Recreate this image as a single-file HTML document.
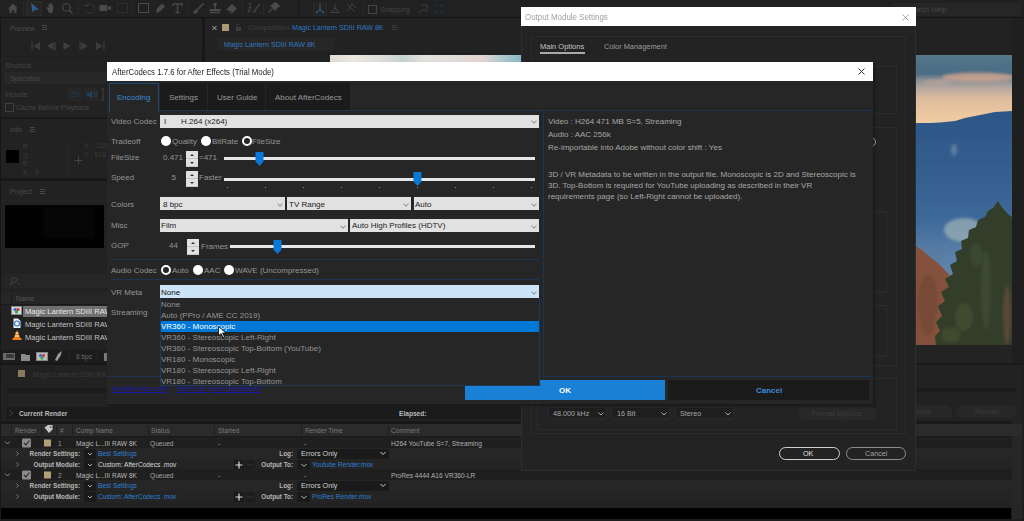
<!DOCTYPE html>
<html><head><meta charset="utf-8">
<style>
html,body{margin:0;padding:0;}
body{width:1024px;height:521px;overflow:hidden;position:relative;background:#202020;font-family:"Liberation Sans",sans-serif;font-size:8px;color:#959595;}
.a{position:absolute;}
.t{position:absolute;white-space:nowrap;line-height:10px;}
.dd{position:absolute;background:#e1e1e1;color:#1a1a1a;}
.chev{position:absolute;width:6px;height:4px;}
.chev:before{content:"";position:absolute;left:1px;top:0.5px;width:3px;height:3px;border-right:1px solid #9a9a9a;border-bottom:1px solid #9a9a9a;transform:rotate(45deg);}
.hl{position:absolute;background:#1b3652;}
.rad{width:10px;height:10px;border-radius:50%;background:#fff;box-sizing:border-box;}
.rad.sel{border:2px solid #fff;background:#262626;}
.spin{width:12px;height:16px;background:#e1e1e1;box-shadow:inset 0 -8px 0 -7px #c8c8c8;}
.spin{background:linear-gradient(#e1e1e1 0,#e1e1e1 7.5px,#c4c4c4 7.5px,#c4c4c4 8.5px,#e1e1e1 8.5px);}
.spin:before{content:"";position:absolute;left:4px;top:3px;border-left:2px solid transparent;border-right:2px solid transparent;border-bottom:2px solid #333;}
.spin:after{content:"";position:absolute;left:4px;top:11px;border-left:2px solid transparent;border-right:2px solid transparent;border-top:2px solid #333;}
.trk{height:3px;background:#e6e6e6;}
</style></head><body>


<!-- ============ AE BACKGROUND ============ -->
<!-- toolbar -->
<div class="a" style="left:0;top:0;width:1024px;height:17px;background:#212121;"></div>
<div class="a" style="left:0;top:17px;width:1024px;height:1px;background:#141414;"></div>
<svg class="a" style="left:0;top:0;" width="460" height="17">
 <g fill="#4a4a4a" stroke="none">
  <path d="M8 8.5L13 3.8L18 8.5H16.5V13H14.2V10.3H11.8V13H9.5V8.5Z"/>
 </g>
 <g stroke="#2a2a2a" stroke-width="1"><path d="M23.5 2V15M78.5 2V15M132.5 2V15M187.5 2V15M242.5 2V15M263.5 2V15M363.5 2V15"/></g>
 <path d="M299 0V17" stroke="#1a1a1a" stroke-width="1.5"/>
 <rect x="26.5" y="1.5" width="15" height="14" fill="#262626" stroke="#2c2c2c"/>
 <path d="M31 3L39 9.5L35 9.8L32.5 12.5Z" fill="#2d5f8a"/>
 <path d="M47.5 9.5L46.5 7.5C46.5 6.8 47.5 6.8 48 7.5L48.5 8.5V4.5C48.5 3.8 49.6 3.8 49.6 4.5V7.5V3.5C49.6 2.8 50.8 2.8 50.8 3.5V7.5V4C50.8 3.3 52 3.3 52 4V8V5.5C52 4.8 53.2 4.8 53.2 5.5V10C53.2 12 52 13.2 50.5 13.2C49 13.2 48.3 12.3 47.5 9.5Z" fill="#4a4a4a"/>
 <circle cx="66.5" cy="7.5" r="3.8" fill="none" stroke="#4a4a4a" stroke-width="1.1"/>
 <path d="M69.3 10.3L72.5 13.5" stroke="#4a4a4a" stroke-width="1.3"/>
 <path d="M86 6A4.5 4.5 0 1 1 86.5 11.5" fill="none" stroke="#3e3e3e" stroke-width="1.1" stroke-dasharray="1.5 0.8"/>
 <path d="M84.5 4L86.3 6.5L88.8 4.8" fill="none" stroke="#3e3e3e" stroke-width="1"/>
 <rect x="99.5" y="5" width="8" height="6" rx="1" fill="#4a4a4a"/><path d="M107 8L111 5.5V10.5Z" fill="#4a4a4a"/>
 <rect x="117.5" y="3.5" width="10" height="9" fill="none" stroke="#3a3a3a" stroke-dasharray="1.2 1"/>
 <rect x="138.5" y="3.5" width="10" height="9" fill="none" stroke="#4a4a4a" stroke-width="1"/>
 <path d="M156 13L157 8.5L162 3.5L165 6.5L160 11.5Z" fill="#4a4a4a"/>
 <path d="M173 4H182V6M177.5 4V12.5M175.5 12.5H179.5M173 4V6" fill="none" stroke="#4a4a4a" stroke-width="1.3"/>
 <path d="M203.5 3.5L197.5 9.5" stroke="#4a4a4a" stroke-width="1.6"/><path d="M196.5 9L198.5 11L196 13.5L193.5 13.5L193.8 11.5Z" fill="#4a4a4a"/>
 <circle cx="215" cy="4.5" r="1.8" fill="#4a4a4a"/><rect x="214.3" y="5" width="1.4" height="4" fill="#4a4a4a"/><rect x="209.5" y="9" width="11" height="2.3" fill="#4a4a4a"/><rect x="210" y="12" width="10" height="1.2" fill="#4a4a4a"/>
 <path d="M226.5 9.5L232 4L237 8.5L231.5 14Z" fill="#4a4a4a"/><path d="M228.5 10.5L232.5 13" stroke="#222" stroke-width="0.8"/>
 <circle cx="250" cy="3.8" r="1.1" fill="#444"/><path d="M250 5.5L249.2 9.5L248 13M249.5 7L252 8.5M249.2 9.5L251 12" stroke="#444" stroke-width="1" fill="none"/>
 <path d="M260 4L255 10" stroke="#444" stroke-width="1.3"/><path d="M254.5 9.5L256 11L254 13L252.5 12.5Z" fill="#444"/>
 <path d="M276.5 2.5L280.5 6.5L278.5 7L276 9.5L276 11.5L269.5 5L271.5 5L274 2.5Z" fill="#4a4a4a"/><path d="M272.5 8.5L268.5 12.5" stroke="#4a4a4a" stroke-width="1.1"/>
 <rect x="313.5" y="2.5" width="13" height="13" fill="#242424" stroke="#2a2a2a"/>
 <path d="M320 4V9.5L316 13M320 9.5L324 13" stroke="#2b5a85" stroke-width="1.2" fill="none"/>
 <path d="M335 4V8L331 12.5H339L335 8" stroke="#454545" stroke-width="1" fill="none"/>
 <path d="M347 4L355 12M348 11L352 4L356 8" stroke="#404040" stroke-width="1" fill="none"/>
 <rect x="368.5" y="5.5" width="8" height="8" fill="none" stroke="#444" stroke-width="1.1"/>
 <path d="M419 13L423 9L427 12M421 5H427V10" stroke="#3e3e3e" stroke-width="1" fill="none"/>
 <path d="M434 4L436.5 6.5M443 4L440.5 6.5M434 14L436.5 11.5M443 14L440.5 11.5" stroke="#1a3550" stroke-width="1.2"/>
</svg>
<div class="t" style="left:380px;top:5px;color:#444;font-size:7px;">Snapping</div>
<div class="a" style="left:892px;top:3px;width:129px;height:13px;background:#262626;"></div>
<div class="t" style="left:905px;top:5px;color:#464646;font-size:7.6px;">Search Help</div>

<!-- left column panels -->
<div class="a" style="left:0;top:18px;width:1px;height:490px;background:#181818;"></div>
<div class="a" style="left:1px;top:18px;width:201px;height:99px;background:#222;"></div>
<div class="t" style="left:10px;top:24px;color:#4a4a4a;font-size:7px;">Preview</div>
<svg class="a" style="left:0;top:18px;" width="110" height="100">
 <path d="M42 7.5H47M42 9.5H47M42 11.5H47" stroke="#464646" stroke-width="1"/>
 <g fill="#3e3e3e"><rect x="31.5" y="24" width="1.3" height="8"/><path d="M33.5 28L40 24V32Z"/>
 <path d="M47 28L53.5 24V32Z"/><rect x="54.2" y="24" width="1.3" height="8"/>
 <path d="M63.5 24L70.5 28L63.5 32Z"/>
 <rect x="79.5" y="24" width="1.3" height="8"/><path d="M81.5 24L88 28L81.5 32Z"/>
 <path d="M96 24L102.5 28L96 32Z"/><rect x="103.2" y="24" width="1.3" height="8"/></g>
 <rect x="4" y="38" width="106" height="1" fill="#1e1e1e"/>
</svg>
<div class="t" style="left:5px;top:61px;color:#464646;font-size:7px;">Shortcut</div>
<div class="a" style="left:4px;top:72px;width:110px;height:12px;background:#272727;"></div>
<div class="t" style="left:10px;top:74px;color:#474747;font-size:7px;">Spacebar</div>
<div class="t" style="left:5px;top:90px;color:#464646;font-size:7px;">Include:</div>
<div class="a" style="left:68px;top:88px;width:14px;height:13px;background:#262626;"></div>
<div class="a" style="left:84px;top:88px;width:14px;height:13px;background:#262626;"></div>
<svg class="a" style="left:68px;top:88px;" width="40" height="14">
 <ellipse cx="7" cy="6.5" rx="3.5" ry="2.3" fill="none" stroke="#1c3a55" stroke-width="1"/>
 <path d="M19 5H21L24 2.5V10.5L21 8H19Z" fill="#1f4260"/><path d="M26 4Q27.5 6.5 26 9M28 3Q30 6.5 28 10" stroke="#1f4260" fill="none"/>
 <path d="M35 1V12M33.5 1H36.5M33.5 12H36.5" stroke="#404040" fill="none"/>
</svg>
<div class="a" style="left:5px;top:103px;width:7px;height:7px;border:1px solid #3e3e3e;"></div>
<div class="t" style="left:16px;top:103px;color:#454545;font-size:7px;">Cache Before Playback</div>

<div class="a" style="left:1px;top:117px;width:201px;height:2px;background:#181818;"></div>
<div class="a" style="left:1px;top:119px;width:201px;height:59px;background:#222;"></div>
<div class="t" style="left:10px;top:125px;color:#4a4a4a;font-size:7px;">Info</div>
<svg class="a" style="left:30px;top:126px;" width="8" height="8"><path d="M0 1.5H5M0 3.5H5M0 5.5H5" stroke="#464646"/></svg>
<div class="a" style="left:6px;top:150px;width:13px;height:13px;background:#000;"></div>
<div class="t" style="left:23px;top:143px;color:#3c3c3c;font-size:7px;line-height:8.7px;">R :<br>G :<br>B :<br>A :&nbsp;&nbsp;0</div>
<div class="a" style="left:68px;top:143px;width:1px;height:33px;background:#282828;"></div>
<svg class="a" style="left:74px;top:156px;" width="9" height="9"><path d="M4.5 0.5V8.5M0.5 4.5H8.5" stroke="#444" stroke-width="1"/></svg>
<div class="t" style="left:84px;top:142px;color:#3c3c3c;font-size:7px;line-height:8.5px;">X : -111<br>Y : 518</div>

<div class="a" style="left:1px;top:178px;width:201px;height:3px;background:#181818;"></div>
<div class="a" style="left:1px;top:181px;width:201px;height:223px;background:#222;"></div>
<div class="t" style="left:10px;top:187px;color:#4a4a4a;font-size:7px;">Project</div>
<svg class="a" style="left:40px;top:188px;" width="8" height="8"><path d="M0 1.5H5M0 3.5H5M0 5.5H5" stroke="#464646"/></svg>
<div class="a" style="left:5px;top:205px;width:99px;height:43px;background:#020202;"></div>
<div class="a" style="left:44px;top:208px;width:50px;height:30px;background:#060606;"></div>
<div class="a" style="left:4px;top:274px;width:106px;height:14px;background:#262626;"></div>
<svg class="a" style="left:8px;top:276px;" width="14" height="10"><circle cx="6" cy="4" r="2.5" fill="none" stroke="#404040"/><path d="M4.5 6L2 9" stroke="#404040" stroke-width="1.2"/><path d="M9 7L10.5 8.5L12 7" fill="none" stroke="#404040" stroke-width="0.8"/></svg>
<div class="a" style="left:1px;top:292px;width:201px;height:12px;background:#262626;"></div>
<div class="a" style="left:11px;top:294px;width:1px;height:9px;background:#1a1a1a;"></div>
<div class="t" style="left:16px;top:294px;color:#555;font-size:6.8px;">Name</div>
<div class="a" style="left:1px;top:304px;width:201px;height:1px;background:#1a1a1a;"></div>
<div class="a" style="left:23px;top:306px;width:84px;height:11px;background:#707070;"></div>
<div class="t" style="left:25px;top:307px;color:#e8e8e8;font-size:7.6px;">Magic Lantern SDIII RAW</div>
<div class="t" style="left:25px;top:320px;color:#c4c4c4;font-size:7.6px;">Magic Lantern SDIII RAW</div>
<div class="t" style="left:25px;top:333px;color:#c4c4c4;font-size:7.6px;">Magic Lantern SDIII RAW</div>
<svg class="a" style="left:10px;top:305px;" width="14" height="40">
 <rect x="1" y="1" width="11" height="9" fill="#888"/><rect x="2" y="2" width="9" height="7" fill="#d6d6d6"/>
 <circle cx="5" cy="4.5" r="1.6" fill="#2a6ad8"/><circle cx="8" cy="4.5" r="1.6" fill="#d83030"/><circle cx="6.5" cy="6.8" r="1.6" fill="#2aa840"/>
 <path d="M3.5 13.5H8L10.5 16V23H3.5Z" fill="#f0f0f0"/><circle cx="7" cy="18.5" r="2.5" fill="none" stroke="#2f7ad8" stroke-width="1.2"/>
 <path d="M7 25L10.5 34H3.5Z" fill="#f08010"/><rect x="2.5" y="33" width="9" height="2" fill="#f08010"/><path d="M5.5 28H8.5M4.8 31H9.2" stroke="#fff" stroke-width="1"/>
</svg>
<div class="a" style="left:1px;top:350px;width:201px;height:13px;background:#1c1c1c;"></div>
<div class="a" style="left:1px;top:363px;width:201px;height:2px;background:#171717;"></div>
<svg class="a" style="left:0;top:350px;" width="110" height="13">
 <rect x="3" y="3" width="12" height="7" fill="#6a6a6a"/><rect x="6" y="4" width="8" height="4" fill="#3a3a3a"/>
 <path d="M21 4H25L26 5H30V11H21Z" fill="#8a8a8a"/>
 <rect x="36" y="2" width="12" height="9" fill="#888"/><rect x="37" y="3" width="10" height="7" fill="#bbb"/>
 <circle cx="40.5" cy="5.5" r="1.5" fill="#2a6ad8"/><circle cx="43.5" cy="5.5" r="1.5" fill="#d83030"/><circle cx="42" cy="8" r="1.5" fill="#2aa840"/>
 <path d="M55 10L58 4L62 1L60.5 6L57 11Z" fill="#999"/>
 <rect x="68.5" y="1" width="1" height="11" fill="#262626"/><rect x="96.5" y="1" width="1" height="11" fill="#262626"/>
 <rect x="104" y="3" width="5" height="8" fill="#777"/>
</svg>
<div class="t" style="left:76px;top:352px;color:#6a6a6a;font-size:6.5px;">8 bpc</div>
<div class="a" style="left:18px;top:370px;width:7px;height:7px;background:#8c7a5e;"></div>
<div class="t" style="left:33px;top:370px;color:#3a3a3a;font-size:7px;">Magic Lantern SDIII RA</div>
<div class="a" style="left:7px;top:388px;width:100px;height:5px;background:#1c1c1c;"></div>

<!-- comp panel -->
<div class="a" style="left:202px;top:18px;width:3px;height:386px;background:#181818;"></div>
<div class="a" style="left:205px;top:18px;width:807px;height:386px;background:#222;"></div>
<svg class="a" style="left:212px;top:22px;" width="30" height="12">
 <path d="M0.5 4L4.5 8M4.5 4L0.5 8" stroke="#aaa" stroke-width="1"/>
 <rect x="10" y="2" width="7" height="7" fill="#ad9874"/>
 <path d="M24.5 5V3.5A1.5 1.5 0 0 1 27.5 3.5" fill="none" stroke="#3c3c3c"/><rect x="24" y="5" width="5" height="4" fill="#3c3c3c"/>
</svg>
<div class="t" style="left:248px;top:23px;color:#3e3e3e;font-size:7.4px;">Composition</div>
<div class="t" style="left:292px;top:23px;color:#3078c0;font-size:7.1px;">Magic Lantern SDIII RAW 8K</div>
<svg class="a" style="left:392px;top:24px;" width="8" height="8"><path d="M0 1.5H5M0 3.5H5M0 5.5H5" stroke="#3a3a3a"/></svg>
<div class="a" style="left:218px;top:38px;width:116px;height:12px;background:#272727;border-radius:2px;"></div>
<div class="a" style="left:205px;top:53px;width:807px;height:1px;background:#1e1e1e;"></div>
<div class="t" style="left:224px;top:40px;color:#3078c0;font-size:7.1px;">Magic Lantern SDIII RAW 8K</div>
<div class="a" style="left:330px;top:55px;width:191px;height:7px;background:linear-gradient(90deg,#e0dcd2 0%,#ece8e0 12%,#d8dcd6 30%,#c4d2d0 38%,#e4e2dc 50%,#e0dcd8 65%,#e4d4d0 80%,#b8ccd0 88%,#88b8c8 100%);"></div>

<!-- right photo -->
<div class="a" id="photo" style="left:916px;top:55px;width:96px;height:290px;overflow:hidden;background:#3a6a9a;"><svg width="96" height="290" style="display:block">
<defs>
<linearGradient id="sky" x1="0" y1="0" x2="0" y2="1">
<stop offset="0" stop-color="#56788c"/><stop offset="0.25" stop-color="#4a6c84"/>
<stop offset="0.33" stop-color="#8a8e94"/><stop offset="0.45" stop-color="#b8aaa0"/>
<stop offset="0.58" stop-color="#dcbc9c"/><stop offset="0.8" stop-color="#ecc8a0"/><stop offset="1" stop-color="#f0d0a8"/>
</linearGradient>
<linearGradient id="mtn" x1="0" y1="0" x2="0" y2="1">
<stop offset="0" stop-color="#2c5686"/><stop offset="0.2" stop-color="#325c8c"/><stop offset="0.45" stop-color="#3c6898"/><stop offset="0.62" stop-color="#5a80a8"/><stop offset="1" stop-color="#7a94b0"/>
</linearGradient>
<filter id="bl" x="-20%" y="-20%" width="140%" height="140%"><feGaussianBlur stdDeviation="1.5"/></filter>
<filter id="bl2"><feGaussianBlur stdDeviation="0.4"/></filter>
</defs>
<rect width="96" height="75" fill="url(#sky)"/>
<g filter="url(#bl)">
<ellipse cx="62" cy="22" rx="36" ry="4.5" fill="#d8a890" opacity="0.75"/>
<ellipse cx="22" cy="27" rx="14" ry="3" fill="#c0a49a" opacity="0.6"/>
</g>
<path d="M0.0 68.0 14.0 68.0 24.0 67.5 39.0 66.0 49.0 63.0 59.0 61.0 69.0 59.0 79.0 57.0 96.0 56.0 L96 290 L0 290Z" fill="url(#mtn)" filter="url(#bl2)"/>
<g filter="url(#bl)">
<ellipse cx="38" cy="95" rx="3" ry="6" fill="#7a94b0" opacity="0.6"/>
<ellipse cx="48" cy="175" rx="20" ry="12" fill="#a0b4b8" opacity="0.7"/>
<ellipse cx="15" cy="200" rx="14" ry="8" fill="#5a78a0" opacity="0.6"/>
</g>
<path d="M0.0 191.0 6.0 195.0 14.0 202.0 22.0 208.0 29.0 215.0 36.0 223.0 42.0 235.0 44.0 290.0 0.0 290.0Z" fill="#84513c" filter="url(#bl2)"/>
<g filter="url(#bl)"><ellipse cx="12" cy="250" rx="10" ry="30" fill="#6e4230" opacity="0.6"/><ellipse cx="30" cy="270" rx="12" ry="20" fill="#86563a" opacity="0.5"/></g>
<path d="M82.0 146.0 85.0 151.0 89.0 156.0 93.0 160.0 96.0 162.0 96.0 290.0 20.0 290.0 19.0 281.0 24.0 276.0 20.0 267.0 26.0 261.0 22.0 251.0 29.0 246.0 25.0 237.0 33.0 232.0 29.0 224.0 37.0 219.0 34.0 210.0 41.0 206.0 39.0 197.0 46.0 194.0 45.0 186.0 52.0 183.0 53.0 175.0 60.0 172.0 62.0 165.0 69.0 162.0 72.0 156.0 77.0 153.0Z" fill="#313d2b" filter="url(#bl2)"/>
<g filter="url(#bl)"><ellipse cx="70" cy="235" rx="5" ry="40" fill="#46563a" opacity="0.5"/><ellipse cx="48" cy="262" rx="9" ry="14" fill="#4a5a36" opacity="0.5"/><ellipse cx="91" cy="260" rx="4" ry="30" fill="#6a4c3c" opacity="0.7"/><ellipse cx="60" cy="200" rx="6" ry="12" fill="#44543a" opacity="0.5"/><ellipse cx="35" cy="280" rx="10" ry="8" fill="#4a5634" opacity="0.5"/></g>
</svg></div>
<div class="a" style="left:1012px;top:18px;width:12px;height:503px;background:#1f1f1f;"></div>

<!-- render queue -->
<div class="a" style="left:205px;top:345px;width:807px;height:18px;background:#232323;"></div>
<div class="a" style="left:205px;top:363px;width:819px;height:2px;background:#1a1a1a;"></div>
<div class="a" style="left:205px;top:365px;width:817px;height:39px;background:#222;"></div>
<div class="a" style="left:1px;top:404px;width:1021px;height:104px;background:#222;"></div>
<div class="a" style="left:880px;top:388px;width:137px;height:4px;background:#1c1c1c;border-radius:2px;"></div>
<div class="a" style="left:890px;top:405px;width:62px;height:13px;background:#272727;border-radius:6px;"></div>
<div class="t" style="left:910px;top:407px;color:#3c3c3c;font-size:7.5px;">Pause</div>
<div class="a" style="left:956px;top:405px;width:61px;height:13px;background:#272727;border-radius:6px;"></div>
<div class="t" style="left:975px;top:407px;color:#3c3c3c;font-size:7.5px;">Render</div>
<div class="a" style="left:6px;top:407px;width:870px;height:12px;background:#1b1b1b;"></div>
<svg class="a" style="left:8px;top:409px;" width="6" height="8"><path d="M1.5 1L4.5 4L1.5 7" stroke="#444" fill="none"/></svg>
<div class="t" style="left:19px;top:409px;color:#b8b8b8;font-size:6.6px;font-weight:bold;">Current Render</div>
<div class="t" style="left:399px;top:409px;color:#b8b8b8;font-size:6.6px;font-weight:bold;">Elapsed:</div>
<div class="a" style="left:1px;top:421px;width:1011px;height:3px;background:#191919;"></div>
<div class="a" style="left:1px;top:424px;width:1021px;height:12px;background:#2b2b2b;"></div>
<div class="a" style="left:1012px;top:436px;width:10px;height:83px;background:#262626;"></div>
<div class="a" style="left:1px;top:436px;width:1011px;height:1px;background:#1a1a1a;"></div>

<svg class="a" style="left:0;top:424px;" width="400" height="12"><g fill="#1e1e1e">
<rect x="11" y="1" width="1" height="10"/><rect x="41" y="1" width="1" height="10"/><rect x="56" y="1" width="1" height="10"/><rect x="72" y="1" width="1" height="10"/><rect x="148" y="1" width="1" height="10"/><rect x="214" y="1" width="1" height="10"/><rect x="301" y="1" width="1" height="10"/><rect x="388" y="1" width="1" height="10"/></g>
<path d="M44.5 3.5L48 1H52.5V5.5L49 9Z" fill="#c8c8c8"/><circle cx="50.5" cy="3" r="0.8" fill="#2a2a2a"/>
</svg>
<div class="t" style="left:15px;top:426px;color:#787878;font-size:6.6px;">Render</div>
<div class="t" style="left:60px;top:426px;color:#787878;font-size:6.6px;">#</div>
<div class="t" style="left:76px;top:426px;color:#787878;font-size:6.6px;">Comp Name</div>
<div class="t" style="left:151px;top:426px;color:#787878;font-size:6.6px;">Status</div>
<div class="t" style="left:218px;top:426px;color:#787878;font-size:6.6px;">Started</div>
<div class="t" style="left:305px;top:426px;color:#787878;font-size:6.6px;">Render Time</div>
<div class="t" style="left:391px;top:426px;color:#787878;font-size:6.6px;">Comment</div>

<div class="a" style="left:1px;top:437px;width:1011px;height:11px;background:#1f1f1f;"></div>
<div class="a" style="left:1px;top:448px;width:1011px;height:11px;background:#262626;"></div>
<div class="a" style="left:1px;top:459px;width:1011px;height:11px;background:#242424;"></div>
<svg class="a" style="left:0;top:437px;" width="100" height="33"><path d="M5 4.5L7.5 7L10 4.5" stroke="#888" fill="none" stroke-width="1"/><rect x="22" y="1.5" width="9" height="9" rx="1" fill="#8a8a8a"/><path d="M24 6L26 8L29.5 3.5" stroke="#2a2a2a" fill="none" stroke-width="1.1"/><rect x="44" y="2.5" width="7" height="7" fill="#b39e7a"/><path d="M16.5 14.5L18.5 16.5L16.5 18.5M16.5 25.5L18.5 27.5L16.5 29.5" stroke="#888" fill="none" stroke-width="0.9"/><rect x="84" y="12" width="12" height="10" fill="#1a1a1a"/><rect x="84" y="23" width="12" height="10" fill="#1a1a1a"/><path d="M88 16L90 18L92 16M88 27L90 29L92 27" stroke="#bbb" fill="none" stroke-width="0.9"/></svg>
<div class="t" style="left:58px;top:439px;color:#9a9a9a;font-size:6.6px;">1</div>
<div class="t" style="left:76px;top:439px;color:#b8b8b8;font-size:6.6px;">Magic L...III RAW 8K</div>
<div class="t" style="left:150px;top:439px;color:#a8a8a8;font-size:6.6px;">Queued</div>
<div class="t" style="left:218px;top:439px;color:#a8a8a8;font-size:6.6px;">-</div>
<div class="t" style="left:304px;top:439px;color:#a8a8a8;font-size:6.6px;">-</div>
<div class="t" style="left:391px;top:439px;color:#b0b0b0;font-size:6.6px;">H264 YouTube S=7, Streaming</div>
<div class="t" style="left:20px;top:449px;width:60px;text-align:right;color:#b8b8b8;font-size:6.3px;font-weight:bold;">Render Settings:</div>
<div class="t" style="left:98px;top:449px;color:#2d7fd0;font-size:6.6px;">Best Settings</div>
<div class="t" style="left:20px;top:460px;width:60px;text-align:right;color:#b8b8b8;font-size:6.3px;font-weight:bold;">Output Module:</div>
<div class="t" style="left:98px;top:460px;color:#d8d8d8;font-size:6.6px;">Custom: AfterCodecs .mov</div>
<div class="t" style="left:233px;top:449px;width:60px;text-align:right;color:#b8b8b8;font-size:6.3px;font-weight:bold;">Log:</div>
<div class="a" style="left:297px;top:449px;width:92px;height:10px;background:#1a1a1a;"></div>
<div class="t" style="left:301px;top:449px;color:#d0d0d0;font-size:7.2px;">Errors Only</div>
<svg class="a" style="left:380px;top:451px;" width="6" height="5"><path d="M0.5 1L3 3.5L5.5 1" stroke="#ccc" fill="none"/></svg>
<div class="t" style="left:233px;top:460px;width:60px;text-align:right;color:#b8b8b8;font-size:6.3px;font-weight:bold;">Output To:</div>
<div class="a" style="left:297px;top:460px;width:13px;height:10px;background:#1a1a1a;"></div>
<svg class="a" style="left:301px;top:463px;" width="6" height="5"><path d="M0.5 1L3 3.5L5.5 1" stroke="#bbb" fill="none"/></svg>
<div class="t" style="left:312px;top:460px;color:#2d7fd0;font-size:6.6px;">Youtube Render.mov</div>
<div class="a" style="left:234px;top:460px;width:10px;height:10px;background:#1a1a1a;"></div>
<div class="a" style="left:245px;top:460px;width:10px;height:10px;background:#1d1d1d;"></div>
<svg class="a" style="left:234px;top:460px;" width="22" height="10"><path d="M5 1.5V8.5M1.5 5H8.5" stroke="#ddd" stroke-width="1.2"/><path d="M12.5 5H19.5" stroke="#333" stroke-width="1"/></svg>
<div class="a" style="left:1px;top:469px;width:1011px;height:11px;background:#1f1f1f;"></div>
<div class="a" style="left:1px;top:480px;width:1011px;height:11px;background:#262626;"></div>
<div class="a" style="left:1px;top:491px;width:1011px;height:11px;background:#242424;"></div>
<svg class="a" style="left:0;top:469px;" width="100" height="33"><path d="M5 4.5L7.5 7L10 4.5" stroke="#888" fill="none" stroke-width="1"/><rect x="22" y="1.5" width="9" height="9" rx="1" fill="#8a8a8a"/><path d="M24 6L26 8L29.5 3.5" stroke="#2a2a2a" fill="none" stroke-width="1.1"/><rect x="44" y="2.5" width="7" height="7" fill="#b39e7a"/><path d="M16.5 14.5L18.5 16.5L16.5 18.5M16.5 25.5L18.5 27.5L16.5 29.5" stroke="#888" fill="none" stroke-width="0.9"/><rect x="84" y="12" width="12" height="10" fill="#1a1a1a"/><rect x="84" y="23" width="12" height="10" fill="#1a1a1a"/><path d="M88 16L90 18L92 16M88 27L90 29L92 27" stroke="#bbb" fill="none" stroke-width="0.9"/></svg>
<div class="t" style="left:58px;top:471px;color:#9a9a9a;font-size:6.6px;">2</div>
<div class="t" style="left:76px;top:471px;color:#b8b8b8;font-size:6.6px;">Magic L...III RAW 8K</div>
<div class="t" style="left:150px;top:471px;color:#a8a8a8;font-size:6.6px;">Queued</div>
<div class="t" style="left:218px;top:471px;color:#a8a8a8;font-size:6.6px;">-</div>
<div class="t" style="left:304px;top:471px;color:#a8a8a8;font-size:6.6px;">-</div>
<div class="t" style="left:391px;top:471px;color:#b0b0b0;font-size:6.6px;">ProRes 4444 A16 VR360-LR</div>
<div class="t" style="left:20px;top:481px;width:60px;text-align:right;color:#b8b8b8;font-size:6.3px;font-weight:bold;">Render Settings:</div>
<div class="t" style="left:98px;top:481px;color:#2d7fd0;font-size:6.6px;">Best Settings</div>
<div class="t" style="left:20px;top:492px;width:60px;text-align:right;color:#b8b8b8;font-size:6.3px;font-weight:bold;">Output Module:</div>
<div class="t" style="left:98px;top:492px;color:#2d7fd0;font-size:6.6px;">Custom: AfterCodecs .mov</div>
<div class="t" style="left:233px;top:481px;width:60px;text-align:right;color:#b8b8b8;font-size:6.3px;font-weight:bold;">Log:</div>
<div class="a" style="left:297px;top:481px;width:92px;height:10px;background:#1a1a1a;"></div>
<div class="t" style="left:301px;top:481px;color:#d0d0d0;font-size:7.2px;">Errors Only</div>
<svg class="a" style="left:380px;top:483px;" width="6" height="5"><path d="M0.5 1L3 3.5L5.5 1" stroke="#ccc" fill="none"/></svg>
<div class="t" style="left:233px;top:492px;width:60px;text-align:right;color:#b8b8b8;font-size:6.3px;font-weight:bold;">Output To:</div>
<div class="a" style="left:297px;top:492px;width:13px;height:10px;background:#1a1a1a;"></div>
<svg class="a" style="left:301px;top:495px;" width="6" height="5"><path d="M0.5 1L3 3.5L5.5 1" stroke="#bbb" fill="none"/></svg>
<div class="t" style="left:312px;top:492px;color:#2d7fd0;font-size:6.6px;">ProRes Render.mov</div>
<div class="a" style="left:234px;top:492px;width:10px;height:10px;background:#1a1a1a;"></div>
<div class="a" style="left:245px;top:492px;width:10px;height:10px;background:#1d1d1d;"></div>
<svg class="a" style="left:234px;top:492px;" width="22" height="10"><path d="M5 1.5V8.5M1.5 5H8.5" stroke="#ddd" stroke-width="1.2"/><path d="M12.5 5H19.5" stroke="#333" stroke-width="1"/></svg>

<div class="a" style="left:0;top:508px;width:1024px;height:13px;background:#1d1d1d;"></div>
<div class="a" style="left:1px;top:508px;width:1010px;height:11px;background:#000;"></div>
<div class="a" style="left:1012px;top:436px;width:10px;height:83px;background:#262626;"></div>

<!-- ============ OUTPUT MODULE SETTINGS ============ -->
<div class="a" style="left:521px;top:7px;width:395px;height:464px;background:#232323;border:1px solid #2e2e2e;box-sizing:border-box;"></div>
<div class="a" style="left:521px;top:7px;width:395px;height:19px;background:#fff;"></div>
<div class="t" style="left:525px;top:11.5px;color:#a0a0a0;font-size:9px;transform:scaleX(0.88);transform-origin:0 0;">Output Module Settings</div>
<svg class="a" style="left:901.5px;top:13.5px;" width="7" height="7"><path d="M0.5 0.5L6.5 6.5M6.5 0.5L0.5 6.5" stroke="#999" stroke-width="0.9"/></svg>
<div class="a" style="left:531px;top:36px;width:375px;height:398px;border:1px solid #2c2c2c;box-sizing:border-box;"></div>
<div class="t" style="left:540px;top:42px;color:#c4c4c4;font-size:7.5px;">Main Options</div>
<div class="a" style="left:540px;top:52px;width:45px;height:2px;background:#aaa;"></div>
<div class="t" style="left:604px;top:42px;color:#9c9c9c;font-size:7.4px;">Color Management</div>
<div class="a" style="left:537px;top:66px;width:360px;height:48px;border:1px solid #2c2c2c;box-sizing:border-box;"></div>
<div class="a" style="left:537px;top:127px;width:360px;height:239px;border:1px solid #2c2c2c;box-sizing:border-box;"></div>
<div class="a" style="left:547px;top:211px;width:340px;height:82px;border:1px solid #2c2c2c;box-sizing:border-box;"></div>
<div class="a" style="left:547px;top:305px;width:340px;height:52px;border:1px solid #2c2c2c;box-sizing:border-box;"></div>
<div class="a" style="left:866px;top:137px;width:10px;height:10px;border:1.3px solid #b0b0b0;border-radius:50%;box-sizing:border-box;"></div>
<div class="a" style="left:537px;top:378px;width:360px;height:52px;border:1px solid #2c2c2c;box-sizing:border-box;"></div>
<div class="a" style="left:548px;top:407px;width:59px;height:12px;background:#1e1e1e;border:1px solid #2a2a2a;border-radius:2px;box-sizing:border-box;"></div>
<div class="t" style="left:553px;top:409px;color:#a8a8a8;font-size:7.2px;">48.000 kHz</div>
<div class="a" style="left:611px;top:407px;width:59px;height:12px;background:#1e1e1e;border:1px solid #2a2a2a;border-radius:2px;box-sizing:border-box;"></div>
<div class="t" style="left:617px;top:409px;color:#a8a8a8;font-size:7.2px;">16 Bit</div>
<div class="a" style="left:675px;top:407px;width:59px;height:12px;background:#1e1e1e;border:1px solid #2a2a2a;border-radius:2px;box-sizing:border-box;"></div>
<div class="t" style="left:680px;top:409px;color:#a8a8a8;font-size:7.2px;">Stereo</div>
<svg class="a" style="left:598px;top:412px;" width="136" height="5"><path d="M0.5 0.5L3 3L5.5 0.5M63.5 0.5L66 3L68.5 0.5M127.5 0.5L130 3L132.5 0.5" stroke="#aaa" fill="none" stroke-width="1"/></svg>
<div class="a" style="left:797px;top:407px;width:80px;height:13px;background:#282828;border-radius:7px;"></div>
<div class="t" style="left:812px;top:409px;color:#3c3c3c;font-size:7.2px;">Format Options...</div>
<div class="a" style="left:779px;top:447px;width:61px;height:13px;border:1.4px solid #d0d0d0;border-radius:7px;box-sizing:border-box;"></div>
<div class="t" style="left:803px;top:449px;color:#e0e0e0;font-size:7.2px;">OK</div>
<div class="a" style="left:846px;top:447px;width:60px;height:13px;border:1.2px solid #8e8e8e;border-radius:7px;box-sizing:border-box;"></div>
<div class="t" style="left:865px;top:449px;color:#a0a0a0;font-size:7.2px;">Cancel</div>
<!-- ============ AFTERCODECS ============ -->
<div class="a" style="left:107px;top:62px;width:766px;height:342px;background:#262626;box-shadow:2px 2px 3px rgba(0,0,0,0.3);"></div>
<div class="a" style="left:107px;top:62px;width:766px;height:19px;background:#fff;"></div>
<div class="t" style="left:112px;top:66.5px;color:#1e1e1e;font-size:9px;transform:scaleX(0.868);transform-origin:0 0;">AfterCodecs 1.7.6 for After Effects (Trial Mode)</div>
<svg class="a" style="left:858px;top:68px;" width="7" height="7"><path d="M0.5 0.5L6.5 6.5M6.5 0.5L0.5 6.5" stroke="#333" stroke-width="1"/></svg>

<!-- tabs -->
<div class="a" style="left:109px;top:83px;width:50px;height:28px;border:1px solid #1e4a72;border-bottom:none;background:#262626;box-sizing:border-box;"></div>
<div class="t" style="left:117px;top:93px;color:#3a8ad0;">Encoding</div>
<div class="a" style="left:160px;top:83px;width:47px;height:27px;background:#1b1b1b;"></div>
<div class="t" style="left:169px;top:93px;color:#9a9a9a;">Settings</div>
<div class="a" style="left:208px;top:83px;width:57px;height:27px;background:#1b1b1b;"></div>
<div class="t" style="left:217px;top:93px;color:#9a9a9a;">User Guide</div>
<div class="a" style="left:266px;top:83px;width:84px;height:27px;background:#1b1b1b;"></div>
<div class="t" style="left:275px;top:93px;color:#9a9a9a;">About AfterCodecs</div>
<div class="hl" style="left:159px;top:110px;width:714px;height:1px;"></div>
<div class="hl" style="left:107px;top:110px;width:2px;height:1px;"></div>

<!-- group borders -->
<div class="hl" style="left:543px;top:111px;width:1px;height:266px;"></div>
<div class="hl" style="left:107px;top:376px;width:434px;height:1px;"></div>
<div class="hl" style="left:543px;top:376px;width:330px;height:1px;"></div>

<!-- Video codec -->
<div class="t" style="left:111px;top:117px;">Video Codec</div>
<div class="dd" style="left:160px;top:115px;width:379px;height:13px;"></div>
<div class="t" style="left:164px;top:117px;color:#222;">I</div>
<div class="t" style="left:181px;top:117px;color:#222;">H.264 (x264)</div>
<div class="chev" style="left:531px;top:118px;"></div>

<!-- Tradeoff -->
<div class="t" style="left:111px;top:137px;">Tradeoff</div>
<div class="a rad" style="left:161px;top:136px;"></div><div class="t" style="left:172px;top:137px;">Quality</div>
<div class="a rad" style="left:201px;top:136px;"></div><div class="t" style="left:212px;top:137px;">BitRate</div>
<div class="a rad sel" style="left:242px;top:136px;"></div><div class="t" style="left:252px;top:137px;">FileSize</div>

<!-- FileSize -->
<div class="t" style="left:111px;top:153px;">FileSize</div>
<div class="t" style="left:163px;top:153px;width:19px;text-align:right;">0.471</div>
<div class="a spin" style="left:186px;top:151px;"></div>
<div class="t" style="left:199px;top:153px;">=471</div>
<div class="a trk" style="left:224px;top:157px;width:311px;"></div>
<svg class="a" style="left:255px;top:152px;" width="9" height="14"><path d="M0.5 0H8.5V9.5L4.5 14L0.5 9.5Z" fill="#0a78d6"/></svg>

<!-- Speed -->
<div class="t" style="left:111px;top:173px;">Speed</div>
<div class="t" style="left:163px;top:173px;width:13px;text-align:right;">5</div>
<div class="a spin" style="left:186px;top:171px;"></div>
<div class="t" style="left:199px;top:173px;">Faster</div>
<div class="a trk" style="left:224px;top:178px;width:311px;"></div>
<svg class="a" style="left:413px;top:172px;" width="9" height="14"><path d="M0.5 0H8.5V9.5L4.5 14L0.5 9.5Z" fill="#0a78d6"/></svg>
<div class="a" style="left:227px;top:187px;width:1px;height:1px;background:#8a8a8a;"></div><div class="a" style="left:265px;top:187px;width:1px;height:1px;background:#8a8a8a;"></div><div class="a" style="left:303px;top:187px;width:1px;height:1px;background:#8a8a8a;"></div><div class="a" style="left:341px;top:187px;width:1px;height:1px;background:#8a8a8a;"></div><div class="a" style="left:379px;top:187px;width:1px;height:1px;background:#8a8a8a;"></div><div class="a" style="left:417px;top:187px;width:1px;height:1px;background:#8a8a8a;"></div><div class="a" style="left:455px;top:187px;width:1px;height:1px;background:#8a8a8a;"></div><div class="a" style="left:493px;top:187px;width:1px;height:1px;background:#8a8a8a;"></div><div class="a" style="left:531px;top:187px;width:1px;height:1px;background:#8a8a8a;"></div>

<!-- Colors -->
<div class="t" style="left:111px;top:200px;">Colors</div>
<div class="dd" style="left:160px;top:197px;width:125px;height:13px;"></div>
<div class="t" style="left:163px;top:200px;color:#222;">8 bpc</div>
<div class="chev" style="left:277px;top:201px;"></div>
<div class="dd" style="left:287px;top:197px;width:124px;height:13px;"></div>
<div class="t" style="left:289px;top:200px;color:#222;">TV Range</div>
<div class="chev" style="left:403px;top:201px;"></div>
<div class="dd" style="left:414px;top:197px;width:125px;height:13px;"></div>
<div class="t" style="left:415px;top:200px;color:#222;">Auto</div>
<div class="chev" style="left:531px;top:201px;"></div>

<!-- Misc -->
<div class="t" style="left:111px;top:221px;">Misc</div>
<div class="dd" style="left:160px;top:219px;width:188px;height:13px;"></div>
<div class="t" style="left:161px;top:221px;color:#222;">Film</div>
<div class="chev" style="left:340px;top:223px;"></div>
<div class="dd" style="left:350px;top:219px;width:189px;height:13px;"></div>
<div class="t" style="left:352px;top:221px;color:#222;">Auto High Profiles (HDTV)</div>
<div class="chev" style="left:531px;top:223px;"></div>

<!-- GOP -->
<div class="t" style="left:111px;top:241px;">GOP</div>
<div class="t" style="left:163px;top:241px;width:15px;text-align:right;">44</div>
<div class="a spin" style="left:187px;top:239px;"></div>
<div class="t" style="left:201px;top:242px;">Frames</div>
<div class="a trk" style="left:230px;top:245px;width:305px;"></div>
<svg class="a" style="left:273px;top:240px;" width="9" height="14"><path d="M0.5 0H8.5V9.5L4.5 14L0.5 9.5Z" fill="#0a78d6"/></svg>
<div class="hl" style="left:111px;top:259px;width:428px;height:1px;"></div>

<!-- Audio codec -->
<div class="t" style="left:111px;top:266px;">Audio Codec</div>
<div class="a rad sel" style="left:161px;top:265px;"></div><div class="t" style="left:172px;top:266px;">Auto</div>
<div class="a rad" style="left:193px;top:265px;"></div><div class="t" style="left:204px;top:266px;">AAC</div>
<div class="a rad" style="left:224px;top:265px;"></div><div class="t" style="left:235px;top:266px;">WAVE (Uncompressed)</div>
<div class="hl" style="left:111px;top:279px;width:428px;height:1px;"></div>

<!-- OK / Cancel -->
<div class="a" style="left:465px;top:380px;width:200px;height:20px;background:#1a80d6;"></div>
<div class="t" style="left:559px;top:386px;color:#fff;font-weight:bold;">OK</div>
<div class="a" style="left:668px;top:380px;width:201px;height:20px;background:#1b1b1b;"></div>
<div class="t" style="left:756px;top:386px;color:#3a8ad8;font-weight:bold;">Cancel</div>
<!-- VR Meta -->
<div class="t" style="left:111px;top:288px;">VR Meta</div>
<div class="t" style="left:111px;top:308px;">Streaming</div>
<div class="a" style="left:160px;top:285px;width:379px;height:13px;background:#cce4f7;"></div>
<div class="t" style="left:161px;top:288px;color:#111;">None</div>
<div class="chev" style="left:531px;top:289px;"></div>
<div class="a" style="left:160px;top:298px;width:380px;height:88px;background:#262626;border:1px solid #1d3a56;border-top:none;box-sizing:border-box;"></div>
<div class="a" style="left:161px;top:321px;width:378px;height:11px;background:#0078d7;"></div>
<div class="t" style="left:161px;top:300px;">None</div>
<div class="t" style="left:161px;top:311px;">Auto (PPro / AME CC 2019)</div>
<div class="t" style="left:161px;top:322px;color:#fff;">VR360 - Monoscopic</div>
<div class="t" style="left:161px;top:333px;">VR360 - Stereoscopic Left-Right</div>
<div class="t" style="left:161px;top:344px;">VR360 - Stereoscopic Top-Bottom (YouTube)</div>
<div class="t" style="left:161px;top:355px;">VR180 - Monoscopic</div>
<div class="t" style="left:161px;top:366px;">VR180 - Stereoscopic Left-Right</div>
<div class="t" style="left:161px;top:377px;">VR180 - Stereoscopic Top-Bottom</div>
<svg class="a" style="left:218px;top:326px;" width="9" height="12"><path d="M0.5 0.5V10L3 7.5L5 11.5L6.5 10.8L4.6 7H8Z" fill="#fff" stroke="#000" stroke-width="0.8"/></svg>

<!-- links -->
<div class="t" style="left:112px;top:384px;color:#1a1aa8;text-decoration:underline;">Autokroma.com</div>
<div class="t" style="left:177px;top:384px;color:#1a1aa8;text-decoration:underline;">Send us your feedback!</div>

<!-- right panel -->
<div class="t" style="left:548px;top:117px;color:#a6a6a6;">Video : H264 471 MB S=5, Streaming</div>
<div class="t" style="left:548px;top:130px;color:#a6a6a6;">Audio : AAC 256k</div>
<div class="t" style="left:548px;top:143px;color:#a6a6a6;">Re-importable into Adobe without color shift : Yes</div>
<div class="t" style="left:548px;top:170px;color:#a6a6a6;">3D / VR Metadata to be written in the output file. Monoscopic is 2D and Stereoscopic is</div>
<div class="t" style="left:548px;top:181px;color:#a6a6a6;">3D. Top-Bottom is required for YouTube uploading as described in their VR</div>
<div class="t" style="left:548px;top:192px;color:#a6a6a6;">requirements page (so Left-Right cannot be uploaded).</div>

</body></html>
